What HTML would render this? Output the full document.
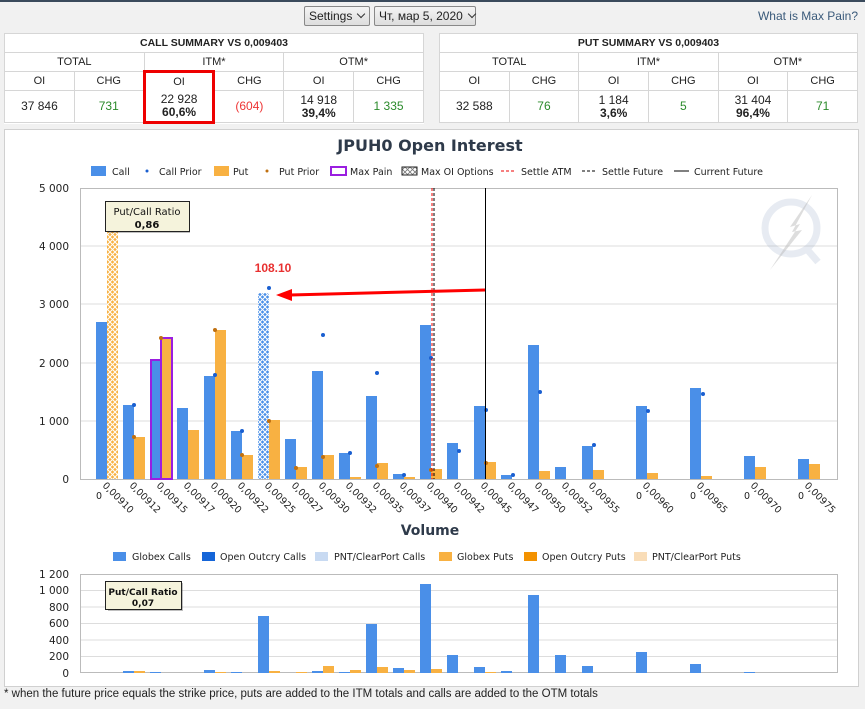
<!DOCTYPE html>
<html><head><meta charset="utf-8"><style>
*{margin:0;padding:0;box-sizing:border-box}
body{width:865px;height:707px;background:#f1f1f1;font-family:"Liberation Sans Narrow","Liberation Sans",sans-serif;font-size:11px;color:#222;position:relative;overflow:hidden;border-top:2px solid #3a4a5c}
.sel{position:absolute;top:4px;height:20px;border:1px solid #888;background:linear-gradient(#f4f4f4,#ddd);border-radius:2px;font-size:12px;line-height:18px;padding-left:4px;color:#222;white-space:nowrap}
.sel i{display:inline-block;width:6px;height:6px;border-right:1px solid #333;border-bottom:1px solid #333;transform:rotate(45deg);margin-left:6px;position:relative;top:-3px}
table{position:absolute;top:31px;border-collapse:collapse;background:#fff;height:89px;table-layout:fixed}
td{border:1px solid #d6d6d6;text-align:center;font-size:11px;height:19px;padding:0;white-space:nowrap}
tr.v td{height:32px;font-size:12px;line-height:13px}
.g{color:#2a8a2a}.r{color:#e33}
.panel{position:absolute;left:4px;top:127px;width:855px;height:558px;background:#fff;border:1px solid #d0d0d0}
.foot{position:absolute;left:4px;top:686px;font-size:11.5px;color:#222;white-space:nowrap}
</style></head><body>
<div class="sel" style="left:304px;width:66px">Settings<i></i></div>
<div class="sel" style="left:374px;width:102px">Чт, мар 5, 2020<i></i></div>
<div style="position:absolute;right:7px;top:7px;font-size:12px;color:#3a5a7a;white-space:nowrap">What is Max Pain?</div>
<table style="left:4px;width:420px">
<tr><td colspan="6" style="font-weight:bold;font-size:10.5px">CALL SUMMARY VS 0,009403</td></tr>
<tr><td colspan="2">TOTAL</td><td colspan="2">ITM*</td><td colspan="2">OTM*</td></tr>
<tr><td>OI</td><td>CHG</td><td style="border:3px solid #e00;border-bottom:none">OI</td><td>CHG</td><td>OI</td><td>CHG</td></tr>
<tr class="v"><td>37 846</td><td class="g">731</td><td style="border:3px solid #e00;border-top:none">22 928<br><b>60,6%</b></td><td class="r">(604)</td><td>14 918<br><b>39,4%</b></td><td class="g">1 335</td></tr>
</table>
<table style="left:439px;width:419px">
<tr><td colspan="6" style="font-weight:bold;font-size:10.5px">PUT SUMMARY VS 0,009403</td></tr>
<tr><td colspan="2">TOTAL</td><td colspan="2">ITM*</td><td colspan="2">OTM*</td></tr>
<tr><td>OI</td><td>CHG</td><td>OI</td><td>CHG</td><td>OI</td><td>CHG</td></tr>
<tr class="v"><td>32 588</td><td class="g">76</td><td>1 184<br><b>3,6%</b></td><td class="g">5</td><td>31 404<br><b>96,4%</b></td><td class="g">71</td></tr>
</table>
<div class="panel"></div>
<svg style="position:absolute;left:0;top:0" width="865" height="707" font-family="DejaVu Sans, Liberation Sans, sans-serif">
<defs>
<pattern id="hb" width="5" height="5" patternUnits="userSpaceOnUse"><rect width="5" height="5" fill="#4a8fe8"/><path d="M0 0L5 5M5 0L0 5" stroke="#fff" stroke-width="1"/></pattern>
<pattern id="ho" width="5" height="5" patternUnits="userSpaceOnUse"><rect width="5" height="5" fill="#f8b142"/><path d="M0 0L5 5M5 0L0 5" stroke="#fff" stroke-width="1"/></pattern>
<pattern id="hk" width="5" height="5" patternUnits="userSpaceOnUse"><rect width="5" height="5" fill="#fff"/><path d="M0 0L5 5M5 0L0 5" stroke="#777" stroke-width="0.8"/></pattern>
</defs>
<text x="430" y="149" text-anchor="middle" font-size="16" font-weight="bold" fill="#2e3a4a">JPUH0 Open Interest</text>
<g font-size="9.5" fill="#222">
<rect x="91" y="164" width="15" height="10" fill="#4a8fe8"/><text x="112" y="173">Call</text>
<circle cx="147" cy="169" r="1.5" fill="#1a5fd0"/><text x="159" y="173">Call Prior</text>
<rect x="214" y="164" width="15" height="10" fill="#f8b142"/><text x="233" y="173">Put</text>
<circle cx="267" cy="169" r="1.5" fill="#c07010"/><text x="279" y="173">Put Prior</text>
<rect x="331" y="165" width="15" height="8" fill="none" stroke="#9a1ee0" stroke-width="2"/><text x="350" y="173">Max Pain</text>
<rect x="402" y="165" width="15" height="8" fill="url(#hk)" stroke="#222"/><text x="421" y="173">Max OI Options</text>
<line x1="501" y1="169" x2="516" y2="169" stroke="#e00" stroke-dasharray="3,2"/><text x="521" y="173">Settle ATM</text>
<line x1="582" y1="169" x2="597" y2="169" stroke="#000" stroke-dasharray="3,2"/><text x="602" y="173">Settle Future</text>
<line x1="674" y1="169" x2="689" y2="169" stroke="#000"/><text x="694" y="173">Current Future</text>
</g>
<g stroke="#ddd"><line x1="80" y1="244" x2="838" y2="244"/><line x1="80" y1="302" x2="838" y2="302"/><line x1="80" y1="361" x2="838" y2="361"/><line x1="80" y1="419" x2="838" y2="419"/></g>
<rect x="80.5" y="186.5" width="757" height="291" fill="none" stroke="#bbb"/>
<g opacity="0.2" fill="none" stroke="#8aa0c0" stroke-width="7"><circle cx="791" cy="226" r="26"/><line x1="805" y1="245" x2="818" y2="260"/></g>
<path d="M812 193L790 225L800 222L770 268L802 228L792 230Z" fill="#bbb" opacity="0.5"/>
<g font-size="10.5" fill="#222" text-anchor="end"><text x="69" y="190">5 000</text><text x="69" y="248">4 000</text><text x="69" y="306">3 000</text><text x="69" y="365">2 000</text><text x="69" y="423">1 000</text><text x="69" y="481">0</text></g>
<g fill="#4a8fe8">
<rect x="96" y="320" width="11" height="157"/><rect x="123" y="403" width="11" height="74"/><rect x="177" y="406" width="11" height="71"/><rect x="204" y="374" width="11" height="103"/><rect x="231" y="429" width="11" height="48"/><rect x="285" y="437" width="11" height="40"/><rect x="312" y="369" width="11" height="108"/><rect x="339" y="451" width="11" height="26"/><rect x="366" y="394" width="11" height="83"/><rect x="393" y="472" width="11" height="5"/><rect x="420" y="323" width="11" height="154"/><rect x="447" y="441" width="11" height="36"/><rect x="474" y="404" width="11" height="73"/><rect x="501" y="473" width="11" height="4"/><rect x="528" y="343" width="11" height="134"/><rect x="555" y="465" width="11" height="12"/><rect x="582" y="444" width="11" height="33"/><rect x="636" y="404" width="11" height="73"/><rect x="690" y="386" width="11" height="91"/><rect x="744" y="454" width="11" height="23"/><rect x="798" y="457" width="11" height="20"/>
</g>
<g fill="#f8b142">
<rect x="134" y="435" width="11" height="42"/><rect x="188" y="428" width="11" height="49"/><rect x="215" y="328" width="11" height="149"/><rect x="242" y="453" width="11" height="24"/><rect x="269" y="418" width="11" height="59"/><rect x="296" y="465" width="11" height="12"/><rect x="323" y="453" width="11" height="24"/><rect x="350" y="475" width="11" height="2"/><rect x="377" y="461" width="11" height="16"/><rect x="404" y="475" width="11" height="2"/><rect x="431" y="467" width="11" height="10"/><rect x="485" y="460" width="11" height="17"/><rect x="539" y="469" width="11" height="8"/><rect x="593" y="468" width="11" height="9"/><rect x="647" y="471" width="11" height="6"/><rect x="701" y="474" width="11" height="3"/><rect x="755" y="465" width="11" height="12"/><rect x="809" y="462" width="11" height="15"/>
</g>
<rect x="107" y="227" width="11" height="250" fill="url(#ho)"/>
<rect x="258" y="291" width="11" height="186" fill="url(#hb)"/>
<rect x="151" y="358" width="10" height="119" fill="#4a8fe8" stroke="#9a1ee0" stroke-width="2"/>
<rect x="161" y="336" width="11" height="141" fill="#f8b142" stroke="#9a1ee0" stroke-width="2"/>
<g fill="#1a5fd0"><circle cx="134" cy="403" r="2"/><circle cx="215" cy="373" r="2"/><circle cx="242" cy="429" r="2"/><circle cx="269" cy="286" r="2"/><circle cx="323" cy="333" r="2"/><circle cx="350" cy="451" r="2"/><circle cx="377" cy="371" r="2"/><circle cx="404" cy="473" r="2"/><circle cx="431" cy="356" r="2"/><circle cx="459" cy="449" r="2"/><circle cx="486" cy="408" r="2"/><circle cx="513" cy="473" r="2"/><circle cx="540" cy="390" r="2"/><circle cx="594" cy="443" r="2"/><circle cx="648" cy="409" r="2"/><circle cx="703" cy="392" r="2"/></g>
<g fill="#c07010"><circle cx="134" cy="435" r="2"/><circle cx="161" cy="336" r="2"/><circle cx="215" cy="328" r="2"/><circle cx="242" cy="453" r="2"/><circle cx="269" cy="419" r="2"/><circle cx="296" cy="466" r="2"/><circle cx="323" cy="455" r="2"/><circle cx="377" cy="464" r="2"/><circle cx="431" cy="468" r="2"/><circle cx="486" cy="461" r="2"/></g>
<line x1="432" y1="186" x2="432" y2="477" stroke="#e00" stroke-dasharray="3,2"/>
<line x1="434" y1="186" x2="434" y2="477" stroke="#000" stroke-dasharray="3,2"/>
<line x1="485.5" y1="186" x2="485.5" y2="477" stroke="#000"/>
<line x1="485" y1="288" x2="290" y2="293" stroke="#f00" stroke-width="3"/>
<path d="M276 293L292 287L292 299Z" fill="#f00"/>
<text x="273" y="270" text-anchor="middle" font-size="12" font-weight="bold" fill="#e83030" font-family="Liberation Sans, sans-serif">108.10</text>
<rect x="108" y="201" width="82" height="30" fill="#000" opacity="0.25"/>
<rect x="105.5" y="199.5" width="84" height="30" fill="#f5f3dc" stroke="#222"/>
<text x="147" y="213" text-anchor="middle" font-size="10" fill="#111">Put/Call Ratio</text>
<text x="147" y="226" text-anchor="middle" font-size="10" font-weight="bold" fill="#111">0,86</text>
<g font-size="9.5" fill="#222">
<text transform="translate(102,484) rotate(45)">0,00910</text><text transform="translate(129,484) rotate(45)">0,00912</text><text transform="translate(156,484) rotate(45)">0,00915</text><text transform="translate(183,484) rotate(45)">0,00917</text><text transform="translate(210,484) rotate(45)">0,00920</text><text transform="translate(237,484) rotate(45)">0,00922</text><text transform="translate(264,484) rotate(45)">0,00925</text><text transform="translate(291,484) rotate(45)">0,00927</text><text transform="translate(318,484) rotate(45)">0,00930</text><text transform="translate(345,484) rotate(45)">0,00932</text><text transform="translate(372,484) rotate(45)">0,00935</text><text transform="translate(399,484) rotate(45)">0,00937</text><text transform="translate(426,484) rotate(45)">0,00940</text><text transform="translate(453,484) rotate(45)">0,00942</text><text transform="translate(480,484) rotate(45)">0,00945</text><text transform="translate(507,484) rotate(45)">0,00947</text><text transform="translate(534,484) rotate(45)">0,00950</text><text transform="translate(561,484) rotate(45)">0,00952</text><text transform="translate(588,484) rotate(45)">0,00955</text><text transform="translate(642,484) rotate(45)">0,00960</text><text transform="translate(696,484) rotate(45)">0,00965</text><text transform="translate(750,484) rotate(45)">0,00970</text><text transform="translate(804,484) rotate(45)">0,00975</text>
<text x="96" y="497">0</text><text x="636" y="497">0</text><text x="690" y="497">0</text><text x="744" y="497">0</text><text x="798" y="497">0</text>
</g>
<text x="430" y="533" text-anchor="middle" font-size="14" font-weight="bold" fill="#2e3a4a">Volume</text>
<g font-size="9.5" fill="#222">
<rect x="113" y="550" width="13" height="9" fill="#4a8fe8"/><text x="132" y="558">Globex Calls</text>
<rect x="202" y="550" width="13" height="9" fill="#1565d8"/><text x="220" y="558">Open Outcry Calls</text>
<rect x="315" y="550" width="13" height="9" fill="#c8daf2"/><text x="334" y="558">PNT/ClearPort Calls</text>
<rect x="439" y="550" width="13" height="9" fill="#f8b142"/><text x="457" y="558">Globex Puts</text>
<rect x="524" y="550" width="13" height="9" fill="#f39200"/><text x="542" y="558">Open Outcry Puts</text>
<rect x="634" y="550" width="13" height="9" fill="#f9ddb8"/><text x="652" y="558">PNT/ClearPort Puts</text>
</g>
<g stroke="#ddd"><line x1="80" y1="588.5" x2="838" y2="588.5"/><line x1="80" y1="605" x2="838" y2="605"/><line x1="80" y1="621.5" x2="838" y2="621.5"/><line x1="80" y1="638" x2="838" y2="638"/><line x1="80" y1="654.5" x2="838" y2="654.5"/></g>
<rect x="80.5" y="572.5" width="757" height="98" fill="none" stroke="#bbb"/>
<g font-size="10.5" fill="#222" text-anchor="end"><text x="69" y="576">1 200</text><text x="69" y="592">1 000</text><text x="69" y="609">800</text><text x="69" y="625">600</text><text x="69" y="642">400</text><text x="69" y="658">200</text><text x="69" y="675">0</text></g>
<g fill="#4a8fe8">
<rect x="123" y="669" width="11" height="2"/><rect x="150" y="670" width="11" height="1"/><rect x="204" y="668" width="11" height="3"/><rect x="231" y="670" width="11" height="1"/><rect x="258" y="614" width="11" height="57"/><rect x="312" y="669" width="11" height="2"/><rect x="339" y="670" width="11" height="1"/><rect x="366" y="622" width="11" height="49"/><rect x="393" y="666" width="11" height="5"/><rect x="420" y="582" width="11" height="89"/><rect x="447" y="653" width="11" height="18"/><rect x="474" y="665" width="11" height="6"/><rect x="501" y="669" width="11" height="2"/><rect x="528" y="593" width="11" height="78"/><rect x="555" y="653" width="11" height="18"/><rect x="582" y="664" width="11" height="7"/><rect x="636" y="650" width="11" height="21"/><rect x="690" y="662" width="11" height="9"/><rect x="744" y="670" width="11" height="1"/>
</g>
<g fill="#f8b142">
<rect x="134" y="669" width="11" height="2"/><rect x="215" y="670" width="11" height="1"/><rect x="269" y="669" width="11" height="2"/><rect x="296" y="670" width="11" height="1"/><rect x="323" y="664" width="11" height="7"/><rect x="350" y="668" width="11" height="3"/><rect x="377" y="665" width="11" height="6"/><rect x="404" y="668" width="11" height="3"/><rect x="431" y="667" width="11" height="4"/><rect x="485" y="670" width="11" height="1"/>
</g>
<rect x="108" y="581" width="75" height="28" fill="#000" opacity="0.25"/>
<rect x="105.5" y="579.5" width="76" height="28" fill="#f5f3dc" stroke="#222"/>
<text x="143" y="593" text-anchor="middle" font-size="9" font-weight="bold" fill="#111">Put/Call Ratio</text>
<text x="143" y="604" text-anchor="middle" font-size="9" font-weight="bold" fill="#111">0,07</text>
</svg>
<div class="foot">* when the future price equals the strike price, puts are added to the ITM totals and calls are added to the OTM totals</div>
</body></html>
